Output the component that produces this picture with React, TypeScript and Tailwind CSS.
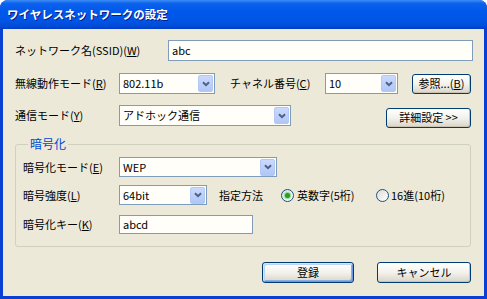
import type { ReactNode } from "react";

function Key({ k }: { k: string }) {
  return (
    <>
      (<span className="underline underline-offset-[1px]">{k}</span>)
    </>
  );
}

function Combo({ w, value }: { w: string; value: string }) {
  return (
    <div className={`flex items-center h-[21px] border border-[#7F9DB9] bg-[#FFFEF8] ${w}`}>
      <span className="flex-1 pl-[3px] text-[11px] leading-none">{value}</span>
      <span className="w-[15px] h-[17px] mr-[1px] rounded-[2px] border border-[#B4C8F4] bg-gradient-to-b from-[#CBDAFD] to-[#AFC6F7] flex items-center justify-center">
        <svg width="8" height="6" viewBox="0 0 8 6">
          <path d="M1 1.2 L4 4.2 L7 1.2" stroke="#4D6185" strokeWidth="2" fill="none" />
        </svg>
      </span>
    </div>
  );
}

function Field({ w, h, value }: { w: string; h: string; value: string }) {
  return (
    <div className={`flex items-center border border-[#7F9DB9] bg-[#FFFEF8] pl-[3px] text-[11px] leading-none ${w} ${h}`}>
      {value}
    </div>
  );
}

function Btn({ w, h, def, children }: { w: string; h: string; def?: boolean; children: ReactNode }) {
  return (
    <button
      className={`${w} ${h} shrink-0 rounded-[3px] border border-[#003C74] bg-gradient-to-b from-white via-[#F3F2EC] to-[#D9D4C8] text-[11px] leading-none flex items-center justify-center ${
        def
          ? "shadow-[inset_1px_1px_0_#CEE7FF,inset_-1px_-1px_0_#6C95E4,inset_2px_2px_0_#BCD4F6,inset_-2px_-2px_0_#89ADE4]"
          : "shadow-[inset_-1px_-1px_0_#C9C3B5]"
      }`}
    >
      {children}
    </button>
  );
}

function Radio({ on }: { on?: boolean }) {
  return (
    <span className="w-[13px] h-[13px] shrink-0 rounded-full border border-[#1C5180] bg-gradient-to-br from-[#DCDCD7] to-white flex items-center justify-center">
      {on && <span className="w-[5px] h-[5px] rounded-full bg-[#21A121] shadow-[0_0_1px_1px_#8DD68D]" />}
    </span>
  );
}

export default function App() {
  return (
    <div className="w-[487px] h-[299px] flex flex-col rounded-t-[8px] overflow-hidden bg-[#0A3FD4] font-['Noto_Sans_CJK_JP',sans-serif] text-black">
      <div className="h-[29px] shrink-0 flex items-center pl-[7px] bg-[linear-gradient(to_bottom,#3D8DF7_0%,#0C62EE_12%,#0058EA_40%,#0054E3_75%,#004AD6_92%,#003CC2_100%)]">
        <span className="text-white font-bold text-[11.5px] leading-none [text-shadow:1px_1px_0_#0A1A8A]">
          ワイヤレスネットワークの設定
        </span>
      </div>

      <div className="flex-1 mx-[3px] mb-[3px] bg-[#ECE9D8] flex flex-col pl-[12px] pr-[11px] text-[11px] leading-none">
        <div className="mt-[11px] flex items-center h-[21px]">
          <span className="w-[153px] shrink-0">
            ネットワーク名(SSID)<Key k="W" />
          </span>
          <Field w="flex-1" h="h-[21px]" value="abc" />
        </div>

        <div className="mt-[12px] flex items-center h-[21px]">
          <span className="w-[104px] shrink-0">
            無線動作モード<Key k="R" />
          </span>
          <Combo w="w-[96px]" value="802.11b" />
          <span className="ml-[15px] w-[95px] shrink-0">
            チャネル番号<Key k="C" />
          </span>
          <Combo w="w-[73px]" value="10" />
          <span className="ml-[14px]">
            <Btn w="w-[59px]" h="h-[20px]">
              参照...<Key k="B" />
            </Btn>
          </span>
        </div>

        <div className="mt-[11px] flex items-center h-[21px]">
          <span className="w-[104px] shrink-0">
            通信モード<Key k="Y" />
          </span>
          <Combo w="w-[172px]" value="アドホック通信" />
          <span className="ml-auto mr-[2px] mt-[4px]">
            <Btn w="w-[85px]" h="h-[20px]">詳細設定 &gt;&gt;</Btn>
          </span>
        </div>

        <fieldset className="mt-[11px] w-[456px] border border-[#D0D0BF] rounded-[3px] pl-[7px] pb-[12px]">
          <legend className="ml-[5px] px-[2px] text-[#0046D5] text-[12px] leading-[14px]">暗号化</legend>
          <div className="mt-[6px] flex items-center h-[20px]">
            <span className="w-[96px] shrink-0">
              暗号化モード<Key k="E" />
            </span>
            <Combo w="w-[158px] !h-[20px]" value="WEP" />
          </div>
          <div className="mt-[8px] flex items-center h-[20px]">
            <span className="w-[96px] shrink-0">
              暗号強度<Key k="L" />
            </span>
            <Combo w="w-[88px] !h-[20px]" value="64bit" />
            <span className="ml-[12px] w-[62px] shrink-0">指定方法</span>
            <span className="w-[95px] shrink-0 flex items-center">
              <Radio on />
              <span className="ml-[3px]">英数字(5桁)</span>
            </span>
            <span className="flex items-center">
              <Radio />
              <span className="ml-[2px]">16進(10桁)</span>
            </span>
          </div>
          <div className="mt-[9px] flex items-center h-[20px]">
            <span className="w-[96px] shrink-0">
              暗号化キー<Key k="K" />
            </span>
            <Field w="w-[134px]" h="h-[19px]" value="abcd" />
          </div>
        </fieldset>

        <div className="mt-[15px] mr-[2px] flex justify-end gap-[23px]">
          <Btn w="w-[92px]" h="h-[21px]" def>
            登録
          </Btn>
          <Btn w="w-[94px]" h="h-[21px]">キャンセル</Btn>
        </div>
      </div>
    </div>
  );
}
